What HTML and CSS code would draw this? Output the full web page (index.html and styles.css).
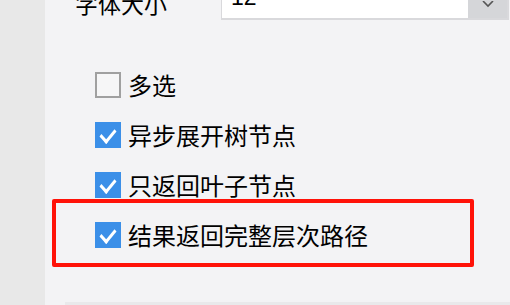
FILE: index.html
```html
<!DOCTYPE html>
<html lang="zh-CN">

<head>
    <meta charset="UTF-8">
    <title>节点选项</title>
    <link rel="stylesheet" href="styles.css">
</head>

<body>
    <div class="sidebar"></div>

    <div class="panel">
        <div class="field-row">
            <label class="field-label">字体大小</label>
            <div class="select">
                <span class="select-value">12</span>
                <span class="select-btn">
                    <svg width="12" height="12" viewBox="0 0 12 12">
                        <polyline points="1,0 6,5 11,0" fill="none" stroke="#555" stroke-width="1.6"/>
                    </svg>
                </span>
            </div>
        </div>

        <ul class="options">
            <li class="option"><span class="box"></span>多选</li>
            <li class="option"><span class="box checked"></span>异步展开树节点</li>
            <li class="option"><span class="box checked"></span>只返回叶子节点</li>
            <li class="option"><span class="box checked"></span>结果返回完整层次路径</li>
        </ul>

        <div class="highlight"></div>

        <div class="panel-foot"></div>
    </div>
</body>
</html>
```

FILE: styles.css
```css
html, body {
    height: 100%;
}

body {
    margin: 0;
    background-color: #f3f3f5;
    font-family: "Noto Sans CJK SC", "Noto Sans", sans-serif;
    color: #000;
    display: flex;
    overflow: hidden;
}

.sidebar {
    width: 45px;
    background: #e8e8e8;
    flex-shrink: 0;
}

.panel {
    flex: 1;
    position: relative;
    display: flex;
    flex-direction: column;
}

.field-row {
    display: flex;
    align-items: center;
    margin-top: -16px;
    height: 38px;
}

.field-label {
    font-size: 23px;
    margin-left: 30px;
    width: 146px;
}

.select {
    display: flex;
    width: 288px;
    height: 36px;
    background: #fff;
    border: 2px solid #d9d9dc;
    border-left-width: 1px;
    box-sizing: border-box;
    align-self: stretch;
}

.select-value {
    flex: 1;
    font-size: 23px;
    padding-left: 9px;
    line-height: 22px;
    font-family: "Liberation Sans", sans-serif;
}

.select-btn {
    width: 39px;
    background: #d5d6d9;
    display: flex;
    justify-content: center;
    padding-top: 15px;
    box-sizing: border-box;
}

.options {
    list-style: none;
    margin: 38px 0 0 0;
    padding: 0 0 0 50px;
}

.option {
    display: flex;
    align-items: center;
    height: 50px;
    font-size: 24px;
    line-height: 26px;
}

.box {
    width: 26px;
    height: 26px;
    box-sizing: border-box;
    border: 2px solid #a0a0a0;
    background: #f6f6f7;
    margin-right: 7px;
    flex-shrink: 0;
    position: relative;
}

.box.checked {
    border: none;
    background: #3b8fe8;
}

.box.checked::after {
    content: "";
    position: absolute;
    top: 7px;
    left: 5px;
    width: 13px;
    height: 7px;
    border-left: 3px solid #fff;
    border-bottom: 3px solid #fff;
    transform: rotate(-50deg) skewX(-8deg);
}

.highlight {
    position: absolute;
    left: 7px;
    top: 199px;
    width: 422px;
    height: 68px;
    border: 4px solid #ff1208;
    border-radius: 2px;
    box-sizing: border-box;
}

.panel-foot {
    margin-top: auto;
    margin-left: 20px;
    height: 3px;
    background: #e9e9eb;
}
```
